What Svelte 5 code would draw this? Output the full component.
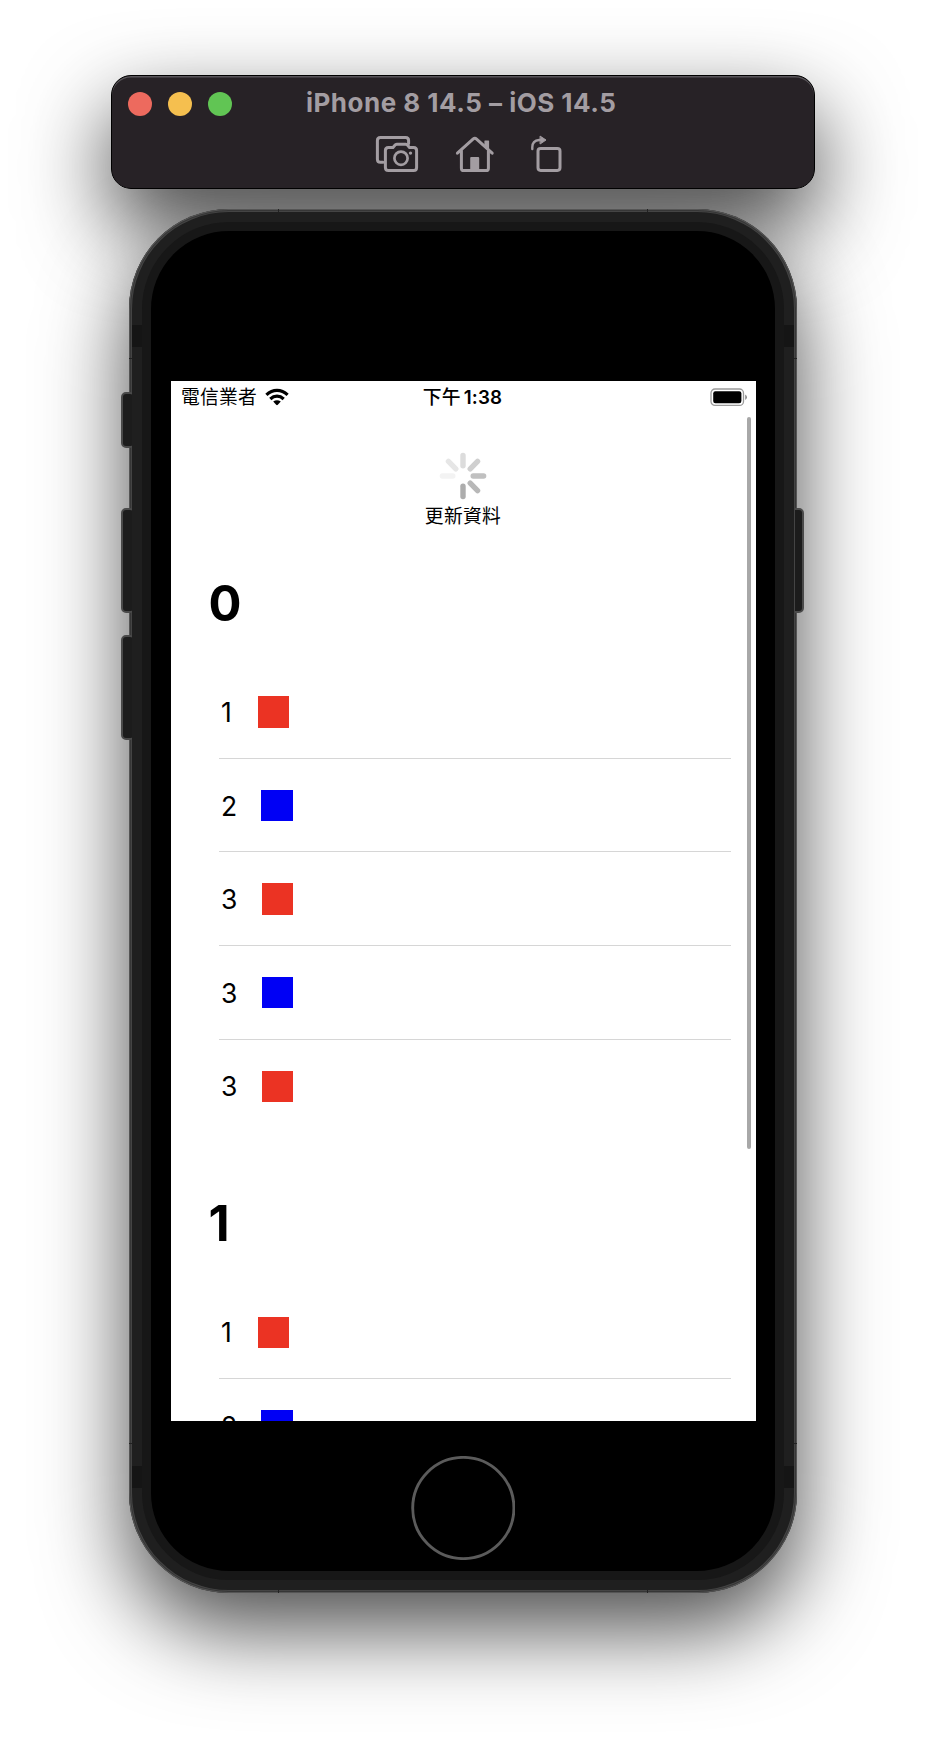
<script>
  const sections = [
    {
      title: '0',
      rows: [
        { label: '1', color: 'red' },
        { label: '2', color: 'blue' },
        { label: '3', color: 'red' },
        { label: '3', color: 'blue' },
        { label: '3', color: 'red' },
      ],
    },
    {
      title: '1',
      rows: [
        { label: '1', color: 'red' },
        { label: '2', color: 'blue' },
      ],
    },
  ];

  // Spinner spokes, clockwise from the top; the upper-left ones are the faintest.
  const spokes = [
    { angle: 0, fill: '#dcdcdc' },
    { angle: 45, fill: '#cfcfcf' },
    { angle: 90, fill: '#c0c0c0' },
    { angle: 135, fill: '#b8b8b8' },
    { angle: 180, fill: '#adadad' },
    { angle: 270, fill: '#f3f3f3' },
    { angle: 315, fill: '#e6e6e6' },
  ];
</script>

<main>
  <header class="window">
    <div class="titlebar">
      <div class="lights">
        <i class="close"></i><i class="minimize"></i><i class="expand"></i>
      </div>
      <h1>iPhone 8 14.5 – iOS 14.5</h1>
    </div>
    <nav class="tools">
      <svg class="camera" width="44" height="38" viewBox="0 0 44 38" fill="none" stroke="#a39da2" stroke-width="3" stroke-linejoin="round" stroke-linecap="round">
        <path d="M8 27.2H5.4Q2.4 27.2 2.4 24.2V5.4Q2.4 2.4 5.4 2.4H30.6Q33.6 2.4 33.6 5.4V8.6" />
        <path d="M13.4 12.4H18L20.3 9.8Q21 9.2 22 9.2H30.5Q31.5 9.2 32.2 9.8L34.5 12.4H38.6Q41.6 12.4 41.6 15.4V32.6Q41.6 35.6 38.6 35.6H13.4Q10.4 35.6 10.4 32.6V15.4Q10.4 12.4 13.4 12.4Z" />
        <circle cx="26" cy="23.2" r="6.6" stroke-width="2.7" />
        <circle cx="35.5" cy="18.1" r="1.7" fill="#a39da2" stroke="none" />
      </svg>
      <svg class="home" width="40" height="38" viewBox="0 0 40 38" fill="none" stroke="#a39da2" stroke-width="3" stroke-linejoin="round" stroke-linecap="round">
        <path d="M2.4 18.2 18 4.1Q19.8 2.5 21.6 4.1L37.2 18.2" />
        <path d="M6.4 16V33.2Q6.4 35.6 8.8 35.6H31Q33.4 35.6 33.4 33.2V16" />
        <path d="M30 6H33.5V15L30 12Z" fill="#a39da2" stroke-width="1.2" />
        <path d="M15.2 35.6V23Q15.2 22 16.2 22H23.2Q24.2 22 24.2 23V35.6Z" fill="#a39da2" stroke="none" />
      </svg>
      <svg class="rotate" width="32" height="38" viewBox="0 0 32 38" fill="none" stroke="#a39da2" stroke-width="3" stroke-linecap="round">
        <rect x="7" y="13.4" width="22" height="22" rx="2.6" />
        <path d="M1.3 14V12.3Q1.3 5.6 8.2 5H10" stroke-width="2.4" />
        <path d="M9.4 1.3 15 5 9.4 8.8Z" fill="#a39da2" stroke-width="1" stroke-linejoin="round" />
      </svg>
    </nav>
  </header>

  <div class="device">
    <i class="key mute"></i>
    <i class="key volume-up"></i>
    <i class="key volume-down"></i>
    <i class="key power"></i>
    <div class="body">
      <i class="band top"></i>
      <i class="band bottom"></i>
      <div class="rim">
        <div class="glass">
          <div class="screen">
            <div class="status">
              <div class="carrier">
                <span>電信業者</span>
                <svg width="24" height="18" viewBox="0 0 24 18">
                  <g fill="none" stroke="#000" stroke-width="3.2">
                    <path d="M1.4 6.8Q6.2 2.3 12 2.3T22.6 6.8" />
                    <path d="M5.3 11Q8.3 8.2 12 8.2T18.7 11" />
                  </g>
                  <path d="M8.2 13.6Q12 10.9 15.8 13.6L12.8 16.8Q12 17.5 11.2 16.8Z" />
                </svg>
              </div>
              <div class="time"><span>下午</span><b>1:38</b></div>
              <svg class="battery" width="38" height="19" viewBox="0 0 38 19">
                <rect x="1" y="1" width="32.5" height="16.4" rx="4" fill="#fff" stroke="#9b9b9b" stroke-width="1.3" />
                <rect x="3.2" y="3.2" width="28.2" height="12" rx="2.2" />
                <path d="M35.2 6.4Q37 7.4 37 9.2T35.2 12Z" fill="#8c8c8c" />
              </svg>
            </div>

            <div class="refresh">
              <svg width="48" height="48" viewBox="-24 -24 48 48">
                {#each spokes as s}
                  <rect x="-2.7" y="-23.3" width="5.4" height="15.8" rx="2.7" fill={s.fill} transform="rotate({s.angle})" />
                {/each}
              </svg>
              <p>更新資料</p>
            </div>

            {#each sections as section}
              <section>
                <h2>{section.title}</h2>
                <ul>
                  {#each section.rows as row}
                    <li>
                      <span class="label n{row.label}">{row.label}</span>
                      <i class="swatch {row.color}"></i>
                    </li>
                  {/each}
                </ul>
              </section>
            {/each}

            <i class="scrollbar"></i>
          </div>
          <div class="home-button"><svg width="104" height="104"><circle cx="52.3" cy="52" r="50.6" fill="none" stroke="#5b5b5b" stroke-width="2.9" /></svg></div>
        </div>
      </div>
    </div>
    <i class="seam h tl"></i><i class="seam h tr"></i><i class="seam h bl"></i><i class="seam h br"></i>
    <i class="seam v tl"></i><i class="seam v tr"></i><i class="seam v bl"></i><i class="seam v br"></i>
  </div>
</main>

<style>
  :global(body) {
    margin: 0;
    background: #fff;
  }
  * {
    box-sizing: border-box;
  }
  i {
    display: block;
    font-style: normal;
  }
  svg {
    display: block;
    flex: none;
  }
  main {
    width: 926px;
    height: 1742px;
    padding-top: 75px;
    overflow: hidden;
    font-family: Inter, 'Noto Sans CJK TC', sans-serif;
    color: #000;
  }

  .window {
    position: relative;
    z-index: 1;
    width: 704px;
    height: 114px;
    margin: 0 auto 20px 111px;
    border: 1px solid #000;
    border-radius: 20px;
    background: #272226;
    box-shadow: inset 0 1.5px 0 #59555a;
  }
  /* The window's shadow falls behind the device. */
  main::before {
    content: '';
    display: block;
    width: 704px;
    height: 114px;
    margin: 0 0 -114px 111px;
    border-radius: 20px;
    box-shadow: 0 36px 86px rgba(0, 0, 0, 0.74);
  }
  .titlebar {
    display: grid;
    grid-template-columns: 194px 320px;
    align-items: center;
    height: 56px;
  }
  .lights {
    display: flex;
    gap: 16px;
    padding-left: 16px;
  }
  .lights i {
    width: 24px;
    height: 24px;
    border-radius: 50%;
  }
  .close {
    background: #ed6a5e;
  }
  .minimize {
    background: #f5bf4f;
  }
  .expand {
    background: #61c554;
  }
  h1 {
    margin: 0;
    padding-bottom: 2px;
    font-size: 26px;
    font-weight: 700;
    line-height: 32px;
    letter-spacing: 0.49px;
    white-space: nowrap;
    color: #a39da2;
  }
  .tools {
    display: flex;
    padding: 3px 0 0 263px;
  }
  .home {
    margin-left: 36px;
  }
  .rotate {
    margin-left: 36px;
  }

  .device {
    position: relative;
    width: 668px;
    height: 1384px;
    margin-left: 129px;
  }
  .body {
    position: relative;
    height: 100%;
    padding: 3px;
    border-radius: 100px;
    background: #444;
    box-shadow: inset 0 0 0 1px #555, inset 0 0 0 2px #363636, 0 36px 86px rgba(0, 0, 0, 0.7);
  }
  .rim {
    height: 100%;
    padding: 10px;
    border-radius: 97px;
    background: #1f1f1f;
  }
  .glass {
    height: 100%;
    padding: 150px 20px 0;
    border: 9px solid #171717;
    border-radius: 87px;
    background: #000;
  }
  .band {
    position: absolute;
    left: 3px;
    right: 3px;
    height: 22px;
    background: #151515;
    z-index: 1;
    clip-path: polygon(0 0, 10px 0, 10px 100%, 0 100%, 0 0, 652px 0, 662px 0, 662px 100%, 652px 100%, 652px 0);
  }
  .band.top {
    top: 116px;
  }
  .band.bottom {
    bottom: 105px;
  }
  .key {
    position: absolute;
    left: -8px;
    width: 14px;
    height: 105px;
    border: 2px solid #4a4a4a;
    border-radius: 5px;
    background: #1c1c1c;
    z-index: 1;
    clip-path: inset(0 3px 0 0);
  }
  .mute {
    top: 183px;
    height: 56px;
  }
  .volume-up {
    top: 299px;
  }
  .volume-down {
    top: 426px;
  }
  .power {
    top: 299px;
    left: auto;
    right: -7px;
    clip-path: inset(0 0 0 5px);
  }
  .seam {
    position: absolute;
    background: #222;
  }
  .seam.h {
    width: 1px;
    height: 3px;
  }
  .seam.v {
    width: 3px;
    height: 1px;
  }
  .h.tl, .h.tr { top: 0; }
  .h.bl, .h.br { bottom: 0; }
  .h.tl, .h.bl { left: 149px; }
  .h.tr, .h.br { right: 149px; }
  .v.tl, .v.bl { left: 0; }
  .v.tr, .v.br { right: 0; }
  .v.tl, .v.tr { top: 149px; }
  .v.bl, .v.br { bottom: 149px; }

  .screen {
    position: relative;
    width: 585px;
    height: 1040px;
    overflow: hidden;
    background: #fff;
  }
  .status {
    display: grid;
    grid-template-columns: 1fr auto 1fr;
    align-items: center;
    height: 31px;
    padding: 0 8px 0 10px;
    font-size: 18.8px;
    line-height: 31px;
  }
  .carrier {
    display: flex;
    align-items: center;
    gap: 8px;
    letter-spacing: 0.25px;
  }
  .carrier span,
  .time {
    padding-top: 1px;
  }
  .time {
    display: flex;
    gap: 3px;
    margin: 0 3px 0 -1px;
    font-weight: 500;
    letter-spacing: 0.2px;
  }
  .time b {
    font-weight: 600;
  }
  .battery {
    justify-self: end;
  }
  .refresh {
    display: flex;
    flex-direction: column;
    align-items: center;
    height: 101px;
    padding: 40px 1px 0 0;
  }
  .refresh p {
    margin: 1px 0 0;
    font-size: 18.8px;
    line-height: 32px;
    letter-spacing: 0.3px;
  }
  section {
    height: 620.4px;
    padding-left: 37.5px;
  }
  h2 {
    margin: 0;
    padding-top: 60.6px;
    height: 152.2px;
    font-size: 48.9px;
    font-weight: 700;
    line-height: 60px;
  }
  ul {
    margin: 0;
    padding: 0 25px 0 10.5px;
    list-style: none;
  }
  li {
    display: flex;
    align-items: center;
    height: 93.6px;
    padding-top: 1px;
    border-bottom: 1px solid #d6d6d6;
  }
  li:last-child {
    border-color: transparent;
  }
  .label {
    width: 43px;
    padding-left: 2px;
    font-size: 26.5px;
    line-height: 32px;
  }
  .n1 {
    width: 38.6px;
  }
  .n2 {
    width: 42.4px;
  }
  .swatch {
    width: 31.4px;
    height: 31.4px;
  }
  .red {
    background: #eb3323;
  }
  .blue {
    background: #0000f5;
  }
  .scrollbar {
    position: absolute;
    top: 36px;
    right: 5px;
    width: 4.5px;
    height: 732px;
    border-radius: 3px;
    background: #a8a8a8;
  }
  .home-button {
    display: flex;
    padding: 35px 0 0 240px;
  }
</style>
